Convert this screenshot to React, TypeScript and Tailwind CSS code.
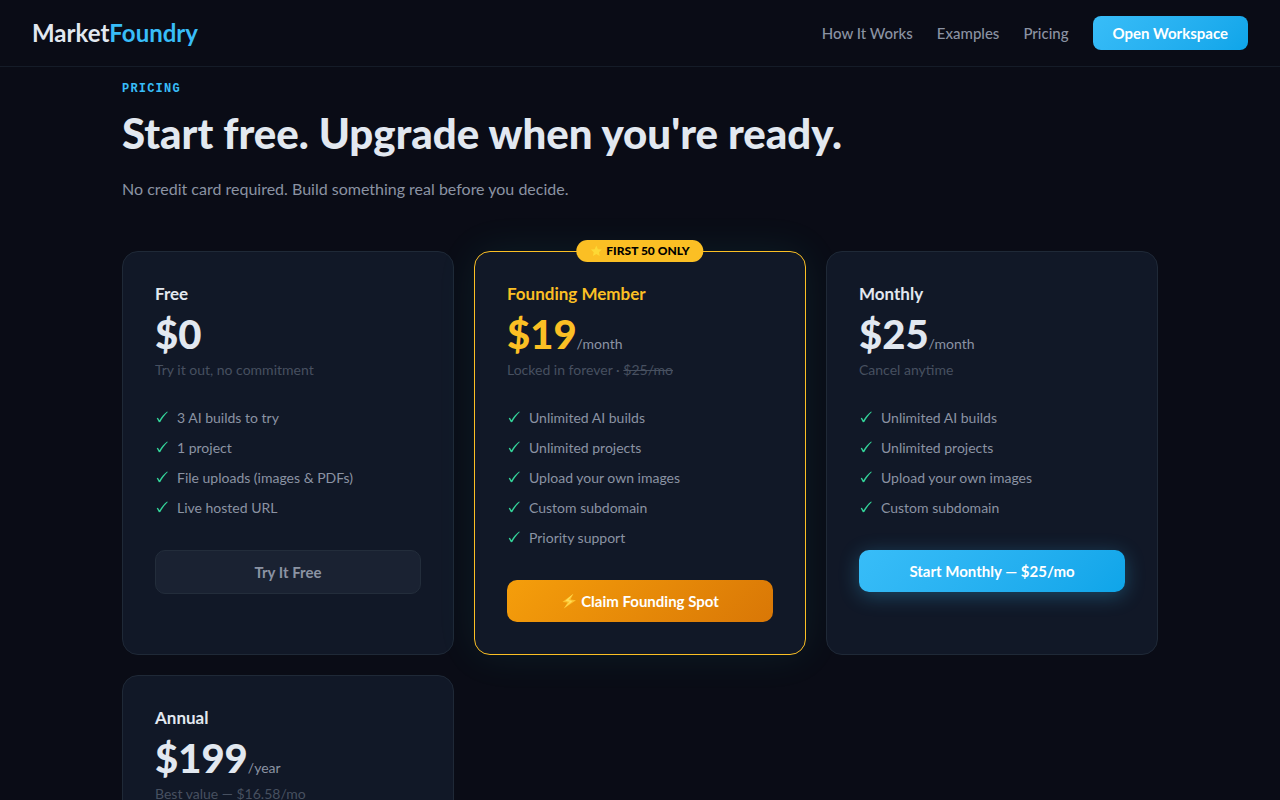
import { clsx } from "clsx";
import type { ReactNode } from "react";

type Plan = {
  name: string;
  price: string;
  period?: string;
  note: ReactNode;
  features: string[];
  cta?: ReactNode;
  variant: "ghost" | "gold" | "primary";
};

function Check() {
  return (
    <svg viewBox="0 0 14 14" className="size-3.5 shrink-0" fill="#34d399" aria-hidden="true">
      <path d="M1.7 7.3 2.9 6.7 4.5 9.3C6.4 6.2 9 3 12.1.6L12.8 1.1C9.8 4 7.2 7.4 5.3 11L3.9 11.3Z" />
    </svg>
  );
}

function Star() {
  return (
    <svg viewBox="0 0 12 12" className="size-3" fill="#fdd835" aria-hidden="true">
      <path d="m6 .6 1.6 3.6 3.9.4-2.9 2.6.8 3.9L6 9.1l-3.4 2 .8-3.9L.5 4.6l3.9-.4z" />
    </svg>
  );
}

function Bolt() {
  return (
    <svg viewBox="0 0 16 16" className="size-4" aria-hidden="true">
      <path d="M12.4.8 1.4 9l5.2.6-3.8 5.8L15 7.2l-5.6-.7z" fill="#fdc22e" />
      <path d="M12.4.8 4.4 7.8l4.4 1L2.8 15.4 11.4 8 7.4 7z" fill="#ffdf5a" />
    </svg>
  );
}

const plans: Plan[] = [
  {
    name: "Free",
    price: "$0",
    note: "Try it out, no commitment",
    features: ["3 AI builds to try", "1 project", "File uploads (images & PDFs)", "Live hosted URL"],
    cta: "Try It Free",
    variant: "ghost",
  },
  {
    name: "Founding Member",
    price: "$19",
    period: "/month",
    note: <>Locked in forever · <s>$25/mo</s></>,
    features: ["Unlimited AI builds", "Unlimited projects", "Upload your own images", "Custom subdomain", "Priority support"],
    cta: <><Bolt /> Claim Founding Spot</>,
    variant: "gold",
  },
  {
    name: "Monthly",
    price: "$25",
    period: "/month",
    note: "Cancel anytime",
    features: ["Unlimited AI builds", "Unlimited projects", "Upload your own images", "Custom subdomain"],
    cta: "Start Monthly — $25/mo",
    variant: "primary",
  },
  {
    name: "Annual",
    price: "$199",
    period: "/year",
    note: "Best value — $16.58/mo",
    features: [],
    variant: "ghost",
  },
];

const links = ["How It Works", "Examples", "Pricing"];

function PlanCard({ plan }: { plan: Plan }) {
  const gold = plan.variant === "gold";
  return (
    <article
      className={clsx(
        "relative rounded-2xl border bg-[#111827] p-8",
        gold ? "border-[#fbbf24] shadow-[0_0_40px_rgba(45,212,191,0.09)]" : "border-[#1f2937]",
      )}
    >
      {gold && (
        <div className="absolute -top-3 left-1/2 flex -translate-x-1/2 items-center gap-1 rounded-full bg-[#fbbf24] px-3.5 py-1 text-[12px] leading-[14px] font-black whitespace-nowrap text-black">
          <Star /> FIRST 50 ONLY
        </div>
      )}
      <h3 className={clsx("mb-2 text-[17px] leading-5 font-bold", gold ? "text-[#fbbf24]" : "text-slate-200")}>{plan.name}</h3>
      <p className={clsx("mb-1 text-[40px] leading-[44px] font-black", gold ? "text-[#fbbf24]" : "text-slate-200")}>
        {plan.price}
        {plan.period && <span className="text-[14px] leading-none font-normal text-[#8b93a3]">{plan.period}</span>}
      </p>
      <p className="mb-7 text-[14px] leading-5 text-[#475060]">{plan.note}</p>
      {plan.features.length > 0 && (
        <ul className="mb-8 flex flex-col gap-2.5">
          {plan.features.map((f) => (
            <li key={f} className="flex items-center gap-2 text-[14px] leading-5 text-[#8b93a3]">
              <Check />
              {f}
            </li>
          ))}
        </ul>
      )}
      {plan.cta && (
        <button
          type="button"
          className={clsx(
            "flex w-full items-center justify-center gap-1 rounded-[10px] py-3 text-[15px] leading-[18px] font-bold",
            plan.variant === "ghost" && "border border-[#232d3b] bg-[#1a2232] text-[#8b93a3]",
            gold && "bg-linear-135 from-[#f59e0b] to-[#d97706] text-white",
            plan.variant === "primary" && "bg-linear-135 from-[#38bdf8] to-[#0ea5e9] text-white shadow-[0_4px_20px_rgba(56,189,248,0.3)]",
          )}
        >
          {plan.cta}
        </button>
      )}
    </article>
  );
}

export default function App() {
  return (
    <div className="h-screen overflow-hidden bg-[#0a0c16] font-['Lato','Liberation_Sans',sans-serif] text-slate-200">
      <header className="flex items-center justify-between border-b border-[#151c28] px-8 py-4">
        <a href="#" className="text-2xl leading-8 font-bold">
          Market<span className="text-[#38bdf8]">Foundry</span>
        </a>
        <nav className="flex items-center gap-6">
          {links.map((l) => (
            <a key={l} href="#" className="text-[15px] leading-[18px] font-medium text-[#8b93a3]">
              {l}
            </a>
          ))}
          <a href="#" className="rounded-lg bg-linear-135 from-[#38bdf8] to-[#0ea5e9] px-5 py-2 text-[15px] leading-[18px] font-bold text-white">
            Open Workspace
          </a>
        </nav>
      </header>
      <main className="mx-auto max-w-[1100px] px-8 pt-3.5">
        <p className="mb-3 font-['Liberation_Mono',monospace] text-xs leading-4 font-bold tracking-widest text-[#38bdf8]">PRICING</p>
        <h1 className="mb-5 text-[42px] leading-[48px] font-black">Start free. Upgrade when you're ready.</h1>
        <p className="mb-[50px] text-base leading-6 text-[#8b93a3]">No credit card required. Build something real before you decide.</p>
        <div className="grid auto-rows-fr grid-cols-1 gap-5 md:grid-cols-2 lg:grid-cols-3">
          {plans.map((p) => (
            <PlanCard key={p.name} plan={p} />
          ))}
        </div>
      </main>
    </div>
  );
}
